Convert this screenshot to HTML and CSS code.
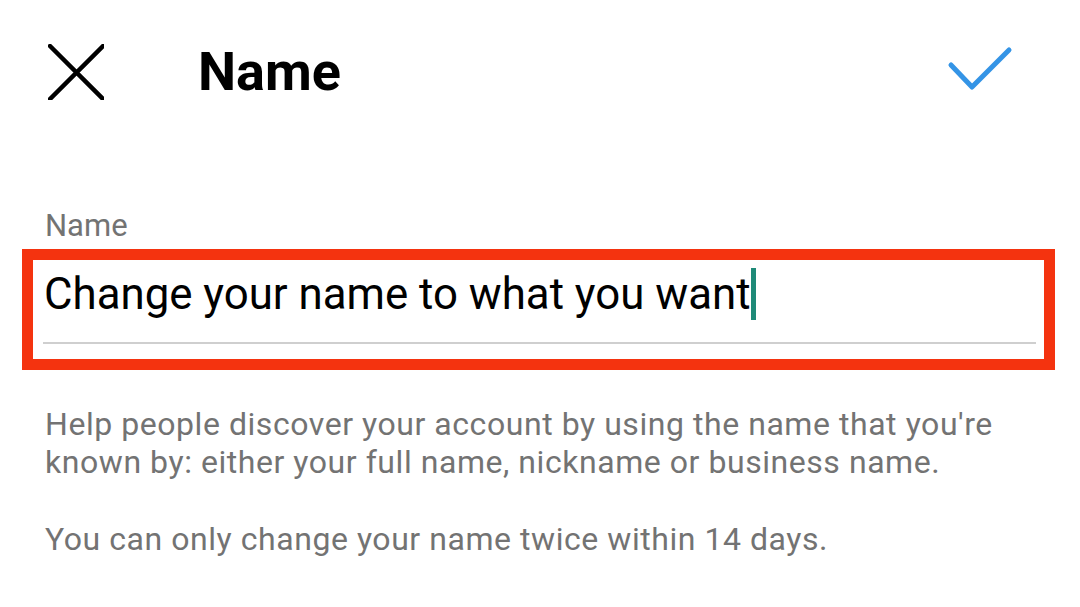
FILE: index.html
```html
<!DOCTYPE html>
<html lang="en">
<head>
    <meta charset="UTF-8">
    <meta name="viewport" content="width=device-width, initial-scale=1.0">
    <title>Name</title>
    <link rel="stylesheet" href="styles.css">
</head>
<body>
    <header class="topbar">
        <button class="icon-btn close-btn" aria-label="Close">
            <svg width="56" height="56" viewBox="0 0 56 56">
                <path d="M2 2 L55 55 M55 2 L2 55" stroke="#000" stroke-width="4.5" stroke-linecap="round" fill="none"/>
            </svg>
        </button>
        <h1 class="title">Name</h1>
        <button class="icon-btn done-btn" aria-label="Done">
            <svg width="80" height="80" viewBox="0 0 80 80">
                <path d="M11 33 L32 55 L69 18" stroke="#3494e6" stroke-width="5" stroke-linecap="round" stroke-linejoin="round" fill="none"/>
            </svg>
        </button>
    </header>

    <main class="content">
        <label class="field-label" for="nameInput">Name</label>
        <div class="field-box">
            <div class="field" id="nameInput">
                <span class="field-value">Change your name to what you want</span><span class="caret"></span>
            </div>
        </div>

        <p class="hint">Help people discover your account by using the name that you're known by: either your full name, nickname or business name.</p>
        <p class="hint hint-last">You can only change your name twice within 14 days.</p>
    </main>
</body>
</html>
```

FILE: styles.css
```css
* {
    box-sizing: border-box;
    font-family: Roboto, 'Noto Sans', sans-serif;
}
body {
    margin: 0;
    background: #ffffff;
    color: #000000;
}
.topbar {
    display: flex;
    align-items: center;
    height: 144px;
    padding: 0 60px 0 48px;
}
.icon-btn {
    background: none;
    border: none;
    padding: 0;
    display: flex;
    cursor: pointer;
}
.title {
    margin: 0 0 0 94px;
    font-size: 54px;
    line-height: 54px;
    font-weight: 700;
}
.done-btn {
    margin-left: auto;
}
.content {
    padding: 0 25px 0 22px;
}
.field-label {
    display: block;
    margin-top: 63px;
    padding-left: 23px;
    font-size: 31px;
    line-height: 38px;
    color: #737373;
}
.field-box {
    margin-top: 4px;
    border: 11px solid #f4330f;
    padding: 0 8px 15px 10px;
}
.field {
    display: flex;
    align-items: center;
    padding: 8px 0 22px 1px;
    border-bottom: 2px solid #cfcfcf;
    font-size: 43.8px;
    line-height: 50px;
    color: #000000;
}
.caret {
    width: 5px;
    height: 52px;
    margin-left: 1px;
    background: #1f8a78;
}
.hint {
    margin: 35px 0 0;
    padding-left: 23px;
    font-size: 32px;
    letter-spacing: 0.55px;
    line-height: 38px;
    color: #737373;
}
.hint-last {
    margin-top: 39px;
}
```
